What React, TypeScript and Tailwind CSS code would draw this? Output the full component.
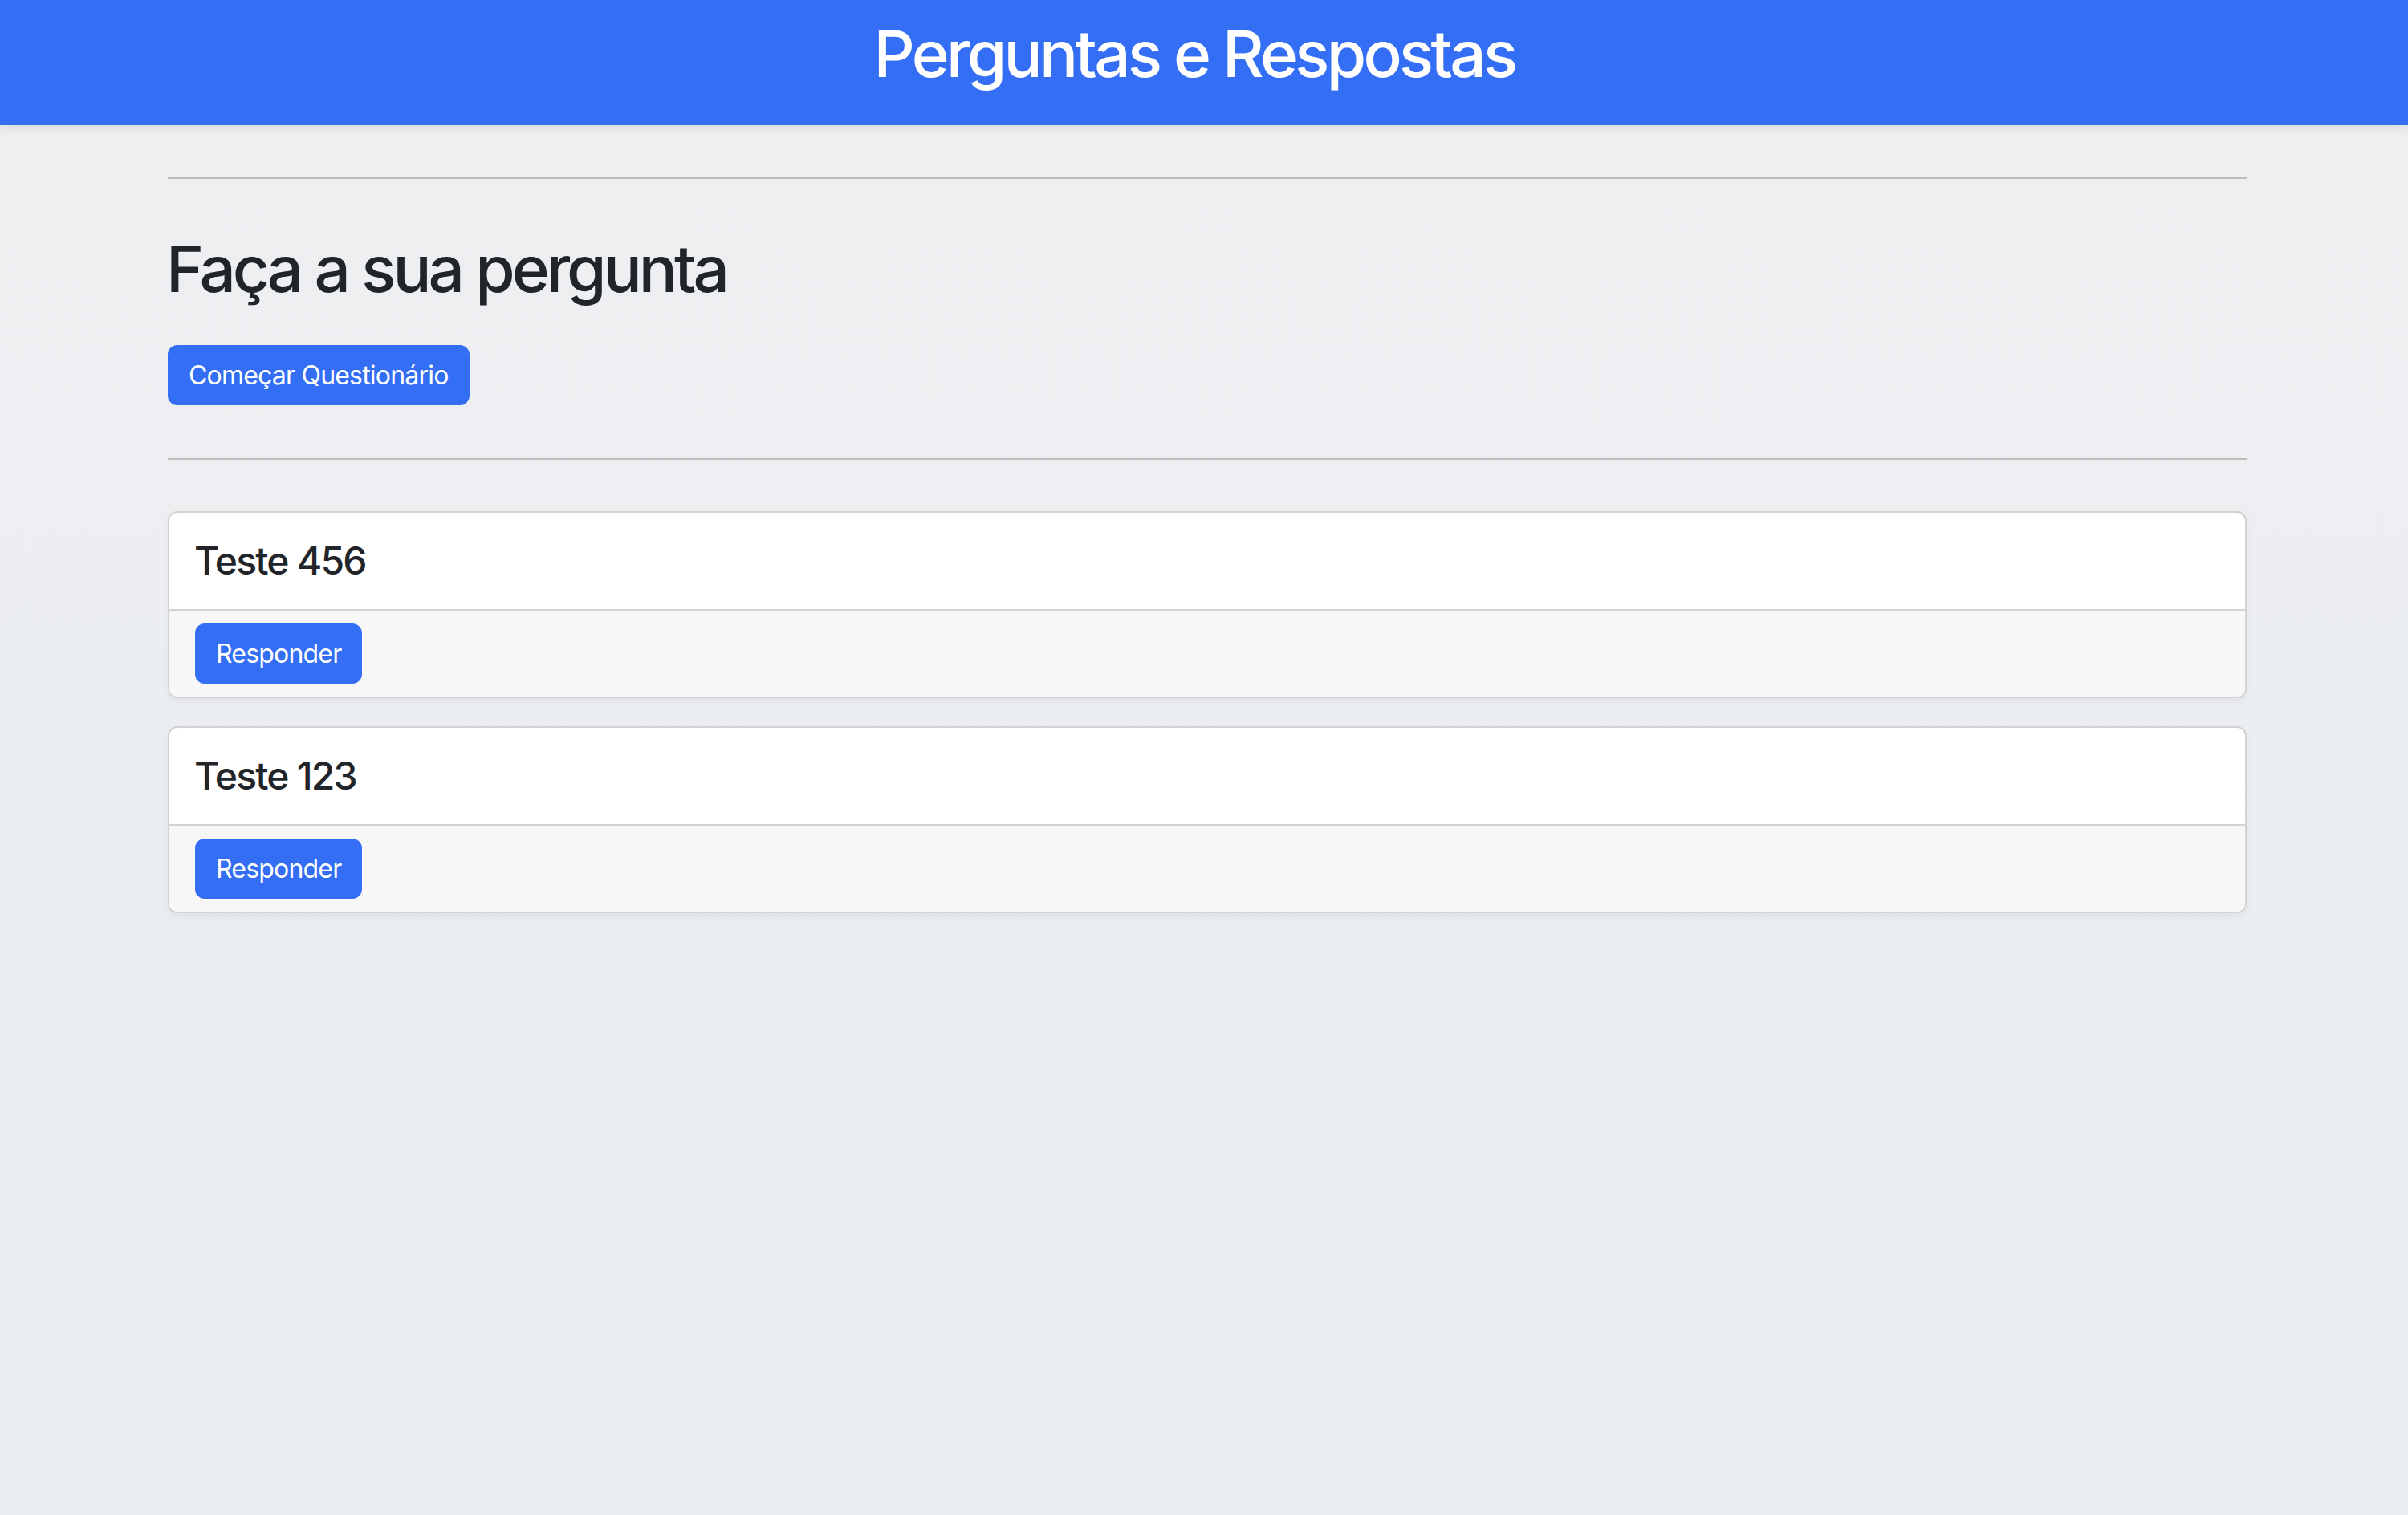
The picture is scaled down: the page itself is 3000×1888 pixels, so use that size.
import React from "react"

type Pergunta = {
  id: number
  titulo: string
}

const perguntas: Pergunta[] = [
  { id: 2, titulo: "Teste 456" },
  { id: 1, titulo: "Teste 123" },
]

function BotaoAzul({ children }: { children: React.ReactNode }) {
  return (
    <button
      type="button"
      className="flex h-[75px] items-center rounded-[12px] border-2 border-[#346ef4] bg-[#346ef4] px-[24px] text-[32px] leading-[48px] tracking-[-0.8px] text-white"
    >
      {children}
    </button>
  )
}

function CartaoPergunta({ pergunta }: { pergunta: Pergunta }) {
  return (
    <div className="mb-[35px] overflow-hidden rounded-[12px] border-2 border-[#d3d3d3] bg-white shadow-[0_4px_10px_rgba(0,0,0,0.05)]">
      <div className="border-b-2 border-[#d3d3d3] px-[32px] py-[31px]">
        <h4 className="-ml-[1px] text-[48px] font-medium leading-[58px] tracking-[-1.8px] text-[#212529]">
          {pergunta.titulo}
        </h4>
      </div>
      <div className="bg-[#f7f7f7] px-[32px] py-[16px]">
        <div className="flex">
          <BotaoAzul>Responder</BotaoAzul>
        </div>
      </div>
    </div>
  )
}

export default function App() {
  return (
    <div
      className="min-h-screen bg-gradient-to-b from-[#eeeff1] to-[#e9edf0] text-[#212529]"
      style={{ fontFamily: "Inter, 'Noto Sans', 'Liberation Sans', sans-serif" }}
    >
      {/* Cabeçalho */}
      <header className="relative z-10 h-[156px] bg-[#346ef4] pr-[24px] pt-[19px] text-center shadow-[0_4px_12px_rgba(0,0,0,0.08)]">
        <h1 className="text-[80px] font-medium leading-[96px] tracking-[-3.7px] text-white">
          Perguntas e Respostas
        </h1>
      </header>

      <main className="ml-[209px] w-[2590px] pt-[65px]">
        <hr className="border-0 border-t-2 border-[#bcbdbf]" />

        <h2 className="-ml-[2px] mt-[64px] text-[80px] font-medium leading-[96px] tracking-[-4px]">
          Faça a sua pergunta
        </h2>

        <div className="mt-[47px] flex">
          <BotaoAzul>Começar Questionário</BotaoAzul>
        </div>

        <hr className="mt-[66px] border-0 border-t-2 border-[#bcbdbf]" />

        {/* Lista de perguntas */}
        <div className="mt-[64px]">
          {perguntas.map((p) => (
            <CartaoPergunta key={p.id} pergunta={p} />
          ))}
        </div>
      </main>
    </div>
  )
}
